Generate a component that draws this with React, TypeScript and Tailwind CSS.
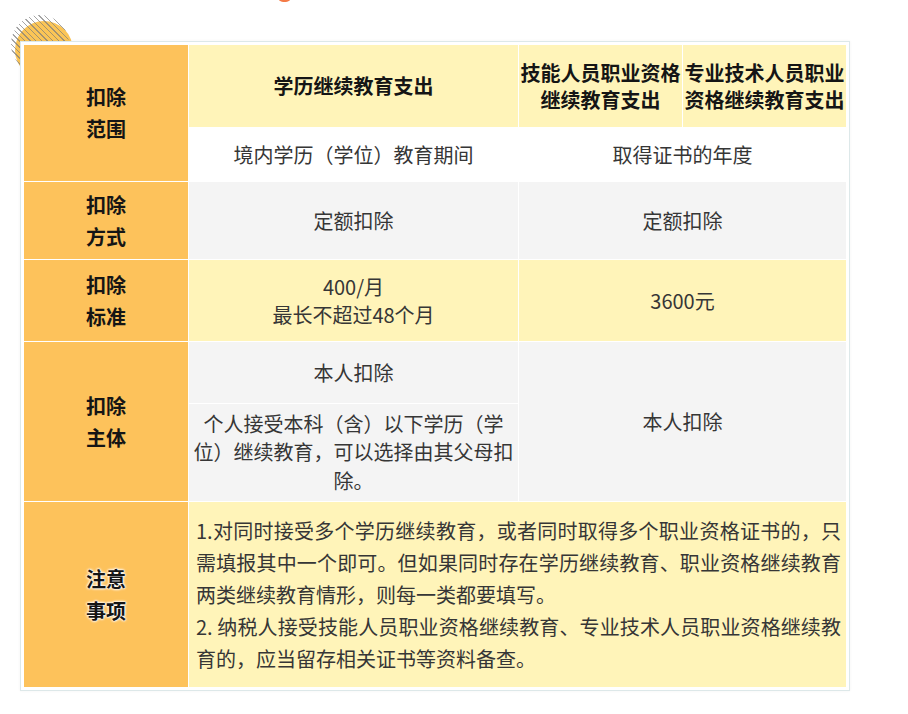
import React from "react";

const font = { fontFamily: '"Noto Sans CJK SC", "Noto Sans", sans-serif' };

export default function App() {
  const label =
    "bg-[#fdc25b] flex items-center justify-center text-center font-bold text-[20px] leading-[32px] text-[#151515]";
  const cell = "flex items-center justify-center text-center text-[20px] text-[#363636]";
  return (
    <div className="relative min-h-[714px] w-[908px] bg-white pt-[41px] pl-[20px]" style={font}>
      {/* decorations */}
      <div className="absolute left-[15px] top-[21px] h-[58px] w-[58px] rounded-full bg-[#fbc556]" />
      <div className="absolute left-[11px] top-[15px] h-[58px] w-[58px] rounded-full opacity-70 bg-[repeating-linear-gradient(45deg,#7d7d7d_0_1px,transparent_1px_4px)]" />
      <div className="absolute left-[278px] top-[-8px] h-[10px] w-[13px] rounded-full bg-[#f47b48]" />

      <div className="relative w-[830px] border border-[#dde8e9] bg-white p-[3px] shadow-[0_0_3px_rgba(0,0,0,0.05)]">
        <div className="grid grid-cols-[164px_329px_163px_163px] grid-rows-[82px_53px_77px_81px_61px_97px_185px] gap-px bg-white">
          {/* row 1-2 label */}
          <div className={`${label} col-start-1 row-start-1 row-span-2`}>
            扣除<br />范围
          </div>
          <div className="col-start-2 row-start-1 flex items-center justify-center bg-[#fff4b9] text-[20px] font-bold text-[#151515]">
            学历继续教育支出
          </div>
          <div className="col-start-3 row-start-1 flex items-center justify-center whitespace-nowrap bg-[#fff4b9] text-center text-[20px] font-bold leading-[27px] text-[#151515]">
            技能人员职业资格<br />继续教育支出
          </div>
          <div className="col-start-4 row-start-1 flex items-center justify-center whitespace-nowrap bg-[#fff4b9] text-center text-[20px] font-bold leading-[27px] text-[#151515]">
            专业技术人员职业<br />资格继续教育支出
          </div>
          <div className={`${cell} col-start-2 row-start-2 bg-white`}>境内学历（学位）教育期间</div>
          <div className={`${cell} col-start-3 col-span-2 row-start-2 bg-white`}>取得证书的年度</div>

          {/* row 3 */}
          <div className={`${label} col-start-1 row-start-3`}>
            扣除<br />方式
          </div>
          <div className={`${cell} col-start-2 row-start-3 bg-[#f4f4f4]`}>定额扣除</div>
          <div className={`${cell} col-start-3 col-span-2 row-start-3 bg-[#f4f4f4]`}>定额扣除</div>

          {/* row 4 */}
          <div className={`${label} col-start-1 row-start-4`}>
            扣除<br />标准
          </div>
          <div className={`${cell} col-start-2 row-start-4 bg-[#fff4b9] leading-[28px]`}>
            400/月<br />最长不超过48个月
          </div>
          <div className={`${cell} col-start-3 col-span-2 row-start-4 bg-[#fff4b9]`}>3600元</div>

          {/* row 5-6 */}
          <div className={`${label} col-start-1 row-start-5 row-span-2 leading-[30px]`}>
            扣除<br />主体
          </div>
          <div className={`${cell} col-start-2 row-start-5 bg-[#f4f4f4]`}>本人扣除</div>
          <div className={`${cell} col-start-2 row-start-6 bg-[#f4f4f4] px-1 leading-[28.5px]`}>
            <div>
              个人接受本科（含）以下学历（学<br />
              位）继续教育，可以选择由其父母扣<br />
              除。
            </div>
          </div>
          <div className={`${cell} col-start-3 col-span-2 row-start-5 row-span-2 bg-[#f4f4f4]`}>本人扣除</div>

          {/* row 7 */}
          <div
            className={`${label} col-start-1 row-start-7 leading-[27px] text-[#2a2a2a] [text-shadow:0_0_1px_#fff,0_0_2px_#fff,0_0_3px_#fff,0_0_3px_#fff]`}
          >
            注意<br />事项
          </div>
          <div className="col-start-2 col-span-3 row-start-7 flex flex-col justify-center bg-[#fff4b9] pl-[7px] pr-[5px] text-[20px] leading-[32px] text-[#363636]">
            <div className="text-justify [text-align-last:justify]">
              1.对同时接受多个学历继续教育，或者同时取得多个职业资格证书的，只
            </div>
            <div className="text-justify [text-align-last:justify]">
              需填报其中一个即可。但如果同时存在学历继续教育、职业资格继续教育
            </div>
            <div>两类继续教育情形，则每一类都要填写。</div>
            <div className="text-justify [text-align-last:justify]">
              2. 纳税人接受技能人员职业资格继续教育、专业技术人员职业资格继续教
            </div>
            <div>育的，应当留存相关证书等资料备查。</div>
          </div>
        </div>
      </div>
    </div>
  );
}
